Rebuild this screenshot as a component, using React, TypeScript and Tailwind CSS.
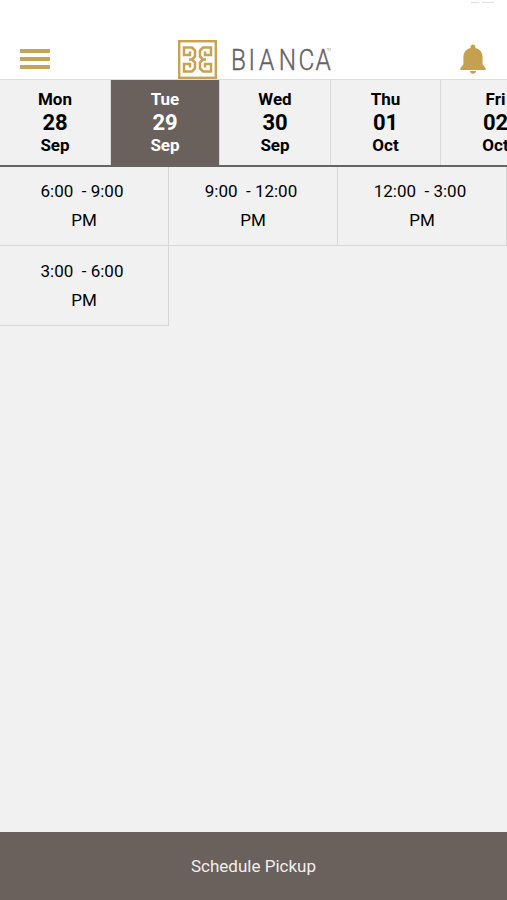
import { useState } from 'react';

const days = [
  { day: 'Mon', date: '28', month: 'Sep', width: 'w-[111px]' },
  { day: 'Tue', date: '29', month: 'Sep', width: 'w-[109px]' },
  { day: 'Wed', date: '30', month: 'Sep', width: 'w-[111px]' },
  { day: 'Thu', date: '01', month: 'Oct', width: 'w-[110px]' },
  { day: 'Fri', date: '02', month: 'Oct', width: 'w-[110px]' },
];

const slots = ['6:00  - 9:00', '9:00  - 12:00', '12:00  - 3:00', '3:00  - 6:00'];

const Logo = () => (
  <div className="flex items-start">
    <svg width="39" height="39" viewBox="0 0 39 39" fill="none" stroke="#c6a252">
      <rect x="1.200" y="1.200" width="36.600" height="36.600" strokeWidth="2.4" />
      <g strokeWidth="2.5">
        <path d="M12 11.500V15H6V7.500H14L17 10.500V16.500L14 19.500L17 22.500V28.500L14 31.500H6V24H12V27.500M11 19.500H15" />
        <path d="M27 11.500V15H33V7.500H25L22 10.500V16.500L25 19.500L22 22.500V28.500L25 31.500H33V24H27V27.500M28 19.500H24" />
      </g>
    </svg>
    <svg
      width="116"
      height="39"
      viewBox="0 0 116 39"
      className="font-['Roboto',sans-serif] font-light"
      fill="#666263"
      stroke="#666263"
      strokeWidth=".4"
    >
      <g transform="scale(.84 1)">
        <text x="16.700 37.500 50 73.500 97 117.200" y="30" fontSize="29">BIANCA</text>
      </g>
      <text x="109.500" y="11" fontSize="3" stroke="none">TM</text>
    </svg>
  </div>
);

const App = () => {
  const [selected, setSelected] = useState(1);

  return (
    <div className="flex h-[900px] w-[507px] flex-col overflow-hidden bg-[#f1f1f1] font-['Roboto',sans-serif] text-black">
      <header className="h-[79px] shrink-0 bg-white">
        <div className="flex h-10 items-start justify-end gap-[3px] pr-[13px] pt-[2px]">
          <span className="h-px w-2 bg-[#dedede]" />
          <span className="h-px w-3 bg-[#dedede]" />
        </div>
        <div className="flex h-[39px] items-start px-5">
          <button aria-label="Menu" className="mt-[9px] flex w-[30px] flex-col gap-1">
            <span className="h-1 w-full bg-[#c6a15b]" />
            <span className="h-1 w-full bg-[#c6a15b]" />
            <span className="h-1 w-full bg-[#c6a15b]" />
          </button>
          <div className="ml-[128px]">
            <Logo />
          </div>
          <button aria-label="Notifications" className="ml-auto mr-px mt-1">
            <svg width="26" height="31" viewBox="0 0 26 31" fill="#c5a04f">
              <path d="M13 .5c1.4 0 2.4 1 2.4 2.4v1c4.700 1 7.200 4.800 7.200 9.300v7.300l3 3.500v2H.4v-2l3-3.500v-7.300c0-4.500 2.500-8.300 7.200-9.300v-1C10.600 1.500 11.600.5 13 .5z" />
              <path d="M10 27h6c0 1.500-1.300 2.700-3 2.700S10 28.500 10 27z" />
            </svg>
          </button>
        </div>
      </header>

      <div className="flex h-[88px] shrink-0 overflow-hidden border-b-2 border-t border-b-[#666463] border-t-[#dddddd]">
        {days.map((d, i) => (
          <button
            key={d.date}
            onClick={() => setSelected(i)}
            className={`${d.width} flex shrink-0 flex-col items-center border-r border-[#d9d9d9] pt-2 font-bold ${
              i === selected ? 'bg-[#6a605c] text-white' : ''
            }`}
          >
            <span className="text-[17px] leading-[22px]">{d.day}</span>
            <span className="text-[22px] leading-[25px]">{d.date}</span>
            <span className="text-[17px] leading-[21px]">{d.month}</span>
          </button>
        ))}
      </div>

      <div className="grid auto-rows-[79px] grid-cols-3">
        {slots.map((slot, i) => (
          <button
            key={slot}
            className={`flex flex-col items-center border-b border-r border-[#d6d6d6] text-[17px] leading-[29px] ${
              i < 3 ? 'pt-[10px]' : 'h-20 pt-[11px]'
            }`}
          >
            <span className="whitespace-pre pr-1">{slot}</span>
            <span>PM</span>
          </button>
        ))}
      </div>

      <button className="mt-auto h-[68px] shrink-0 bg-[#6a605c] pt-px text-[17px] text-[#f1efed]">
        Schedule Pickup
      </button>
    </div>
  );
};

export default App;
